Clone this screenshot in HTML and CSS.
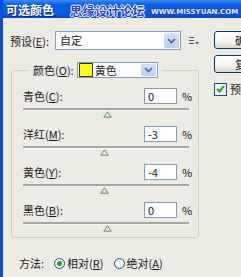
FILE: index.html
```html
<!DOCTYPE html>
<html>
<head>
<meta charset="utf-8">
<title>可选颜色</title>
<link rel="stylesheet" href="styles.css">
</head>
<body>
<div class="dlg">
  <div class="titlebar">
    <span class="ttl">可选颜色</span>
    <span class="wm">思缘设计论坛</span>
    <span class="wm-url">WWW.MISSYUAN.COM</span>
  </div>
  <div class="content">
    <div class="main">
      <div class="preset-row">
        <span class="lbl">预设(<u>E</u>):</span>
        <div class="combo preset">
          <span class="combo-txt">自定</span>
          <span class="drop"><svg width="9" height="6" viewBox="0 0 9 6"><path d="M1 1 L4.5 4.5 L8 1" fill="none" stroke="#4d6185" stroke-width="1.6"/></svg></span>
        </div>
        <svg class="menu-ico" width="10" height="9" viewBox="0 0 10 9"><path d="M0 1.5h5M0 4.5h5M0 7.5h5" stroke="#555" stroke-width="1"/><path d="M6 6h4l-2 2.5z" fill="#555"/></svg>
      </div>

      <fieldset class="group">
        <legend class="legend">
          <span class="lbl">颜色(<u>O</u>):</span>
          <div class="combo color-sel">
            <span class="swatch"></span>
            <span class="combo-txt">黄色</span>
            <span class="drop"><svg width="9" height="6" viewBox="0 0 9 6"><path d="M1 1 L4.5 4.5 L8 1" fill="none" stroke="#4d6185" stroke-width="1.6"/></svg></span>
          </div>
        </legend>

        <div class="chan">
          <div class="chan-top"><span class="lbl">青色(<u>C</u>):</span><span class="num">0</span><span class="pct">%</span></div>
          <div class="track"></div>
          <div class="thumb-row"><svg class="thumb" style="margin-left:80px" width="9" height="7" viewBox="0 0 9 7"><path d="M4.5 0.8 L8.2 6.2 L0.8 6.2 Z" fill="#e9efe4" stroke="#5f8f5f" stroke-width="1"/></svg></div>
        </div>
        <div class="chan">
          <div class="chan-top"><span class="lbl">洋红(<u>M</u>):</span><span class="num">-3</span><span class="pct">%</span></div>
          <div class="track"></div>
          <div class="thumb-row"><svg class="thumb" style="margin-left:77px" width="9" height="7" viewBox="0 0 9 7"><path d="M4.5 0.8 L8.2 6.2 L0.8 6.2 Z" fill="#e9efe4" stroke="#5f8f5f" stroke-width="1"/></svg></div>
        </div>
        <div class="chan">
          <div class="chan-top"><span class="lbl">黄色(<u>Y</u>):</span><span class="num">-4</span><span class="pct">%</span></div>
          <div class="track"></div>
          <div class="thumb-row"><svg class="thumb" style="margin-left:77px" width="9" height="7" viewBox="0 0 9 7"><path d="M4.5 0.8 L8.2 6.2 L0.8 6.2 Z" fill="#e9efe4" stroke="#5f8f5f" stroke-width="1"/></svg></div>
        </div>
        <div class="chan">
          <div class="chan-top"><span class="lbl">黑色(<u>B</u>):</span><span class="num">0</span><span class="pct">%</span></div>
          <div class="track"></div>
          <div class="thumb-row"><svg class="thumb" style="margin-left:80px" width="9" height="7" viewBox="0 0 9 7"><path d="M4.5 0.8 L8.2 6.2 L0.8 6.2 Z" fill="#e9efe4" stroke="#5f8f5f" stroke-width="1"/></svg></div>
        </div>
      </fieldset>

      <div class="method">
        <span class="lbl">方法:</span>
        <span class="radio on"></span><span class="lbl">相对(<u>R</u>)</span>
        <span class="radio"></span><span class="lbl">绝对(<u>A</u>)</span>
      </div>
    </div>

    <div class="side">
      <div class="btn">确定</div>
      <div class="btn">复位</div>
      <div class="check-row">
        <span class="check"><svg width="9" height="8" viewBox="0 0 9 8"><path d="M1 4 L3.5 6.5 L8 1.2" fill="none" stroke="#21a121" stroke-width="2"/></svg></span>
        <span class="lbl">预览(<u>P</u>)</span>
      </div>
    </div>
  </div>
</div>
</body>
</html>
```

FILE: styles.css
```css
html, body { margin: 0; padding: 0; }
body { font-family: "Noto Sans CJK SC", "DejaVu Sans", sans-serif; font-size: 11px; color: #1a1a1a; background: #ece9d8; }
u { text-decoration: underline; text-underline-offset: 1px; }

.dlg { width: 241px; height: 277px; overflow: hidden; border-left: 3px solid #0a4fd8; box-sizing: border-box; background: #ecebe4; }

.titlebar { height: 18px; display: flex; align-items: center; background: linear-gradient(#3f8cf3 0%, #0b5ce6 25%, #0758e2 75%, #0447c9 100%); white-space: nowrap; }
.ttl { color: #fff; font-weight: bold; font-size: 12px; margin-left: 3px; text-shadow: 1px 1px 0 #0a2f8a; }
.wm { margin-left: 16px; margin-top: 3px; color: #1f47c9; font-weight: bold; font-size: 12px; letter-spacing: 0.5px;
  text-shadow: 1px 0 0 #fff, -1px 0 0 #fff, 0 1px 0 #fff, 0 -1px 0 #fff; }
.wm-url { margin-left: 6px; margin-top: 5px; font-family: "DejaVu Sans", sans-serif; font-weight: bold; font-size: 7px; color: #e3ebff; letter-spacing: 0;
  text-shadow: 1px 0 0 #1a3fb8, -1px 0 0 #1a3fb8, 0 1px 0 #1a3fb8, 0 -1px 0 #1a3fb8; }

.content { display: flex; }
.main { width: 211px; flex: none; }
.side { width: 64px; flex: none; }

.preset-row { display: flex; align-items: center; margin-top: 13px; height: 19px; padding-left: 7px; }
.preset-row .lbl { width: 45px; }

.combo { display: flex; align-items: center; background: #fff; border: 1px solid #7f9db9; box-sizing: border-box; }
.combo-txt { flex: 1; padding-left: 4px; line-height: 1; }
.drop { width: 15px; height: calc(100% - 2px); margin-right: 1px; display: flex; align-items: center; justify-content: center;
  background: linear-gradient(#d5e1fc, #b9cdf7); border-radius: 2px; }
.preset { width: 126px; height: 19px; }
.menu-ico { margin-left: 8px; }

.group { margin: 12px 0 0 8px; width: 188px; box-sizing: border-box; padding: 10px 7px 6px 11px; border: 1px solid #d0d0bf; border-radius: 3px; }
.legend { display: flex; align-items: center; margin-left: 6px; padding: 0 4px; height: 16px; }
.color-sel { width: 81px; height: 16px; margin-left: 3px; }
.swatch { width: 12px; height: 12px; background: #ffff00; border: 1px solid #333; margin-left: 1px; flex: none; }
.color-sel .combo-txt { padding-left: 2px; }

.chan { height: 29px; margin-bottom: 9px; }
.chan:last-child { margin-bottom: 0; }
.chan-top { display: flex; align-items: center; height: 16px; }
.chan-top .lbl { flex: 1; }
.num { width: 33px; height: 16px; box-sizing: border-box; border: 1px solid #7f9db9; background: #fff; padding-left: 3px; line-height: 14px; }
.pct { width: 9px; margin-left: 5px; }
.track { width: 166px; height: 2px; margin-top: 4px; background: #a7a6a0; border-bottom: 1px solid #f7f7f4; }
.thumb-row { height: 7px; }
.thumb { display: block; }

.method { display: flex; align-items: center; margin-top: 18px; padding-left: 16px; height: 14px; }
.method .lbl { margin-right: 3px; }
.radio { width: 11px; height: 11px; box-sizing: border-box; border: 1px solid #1c5180; border-radius: 50%; background: #f4f4f0; display: inline-flex; align-items: center; justify-content: center; margin: 0 2px 0 7px; }
.radio.on::after { content: ""; width: 5px; height: 5px; border-radius: 50%; background: #21a121; }

.btn { height: 18px; margin-top: 13px; border: 1px solid #003c74; border-radius: 3px; box-sizing: border-box;
  background: linear-gradient(#ffffff, #f4f3ee 60%, #dcd8ce); display: flex; align-items: center; justify-content: center; }
.btn + .btn { margin-top: 6px; }
.check-row { display: flex; align-items: center; margin-top: 8px; }
.check { width: 13px; height: 13px; box-sizing: border-box; border: 1px solid #1c5180; background: #f6f6f2; display: flex; align-items: center; justify-content: center; margin-right: 3px; }
```
